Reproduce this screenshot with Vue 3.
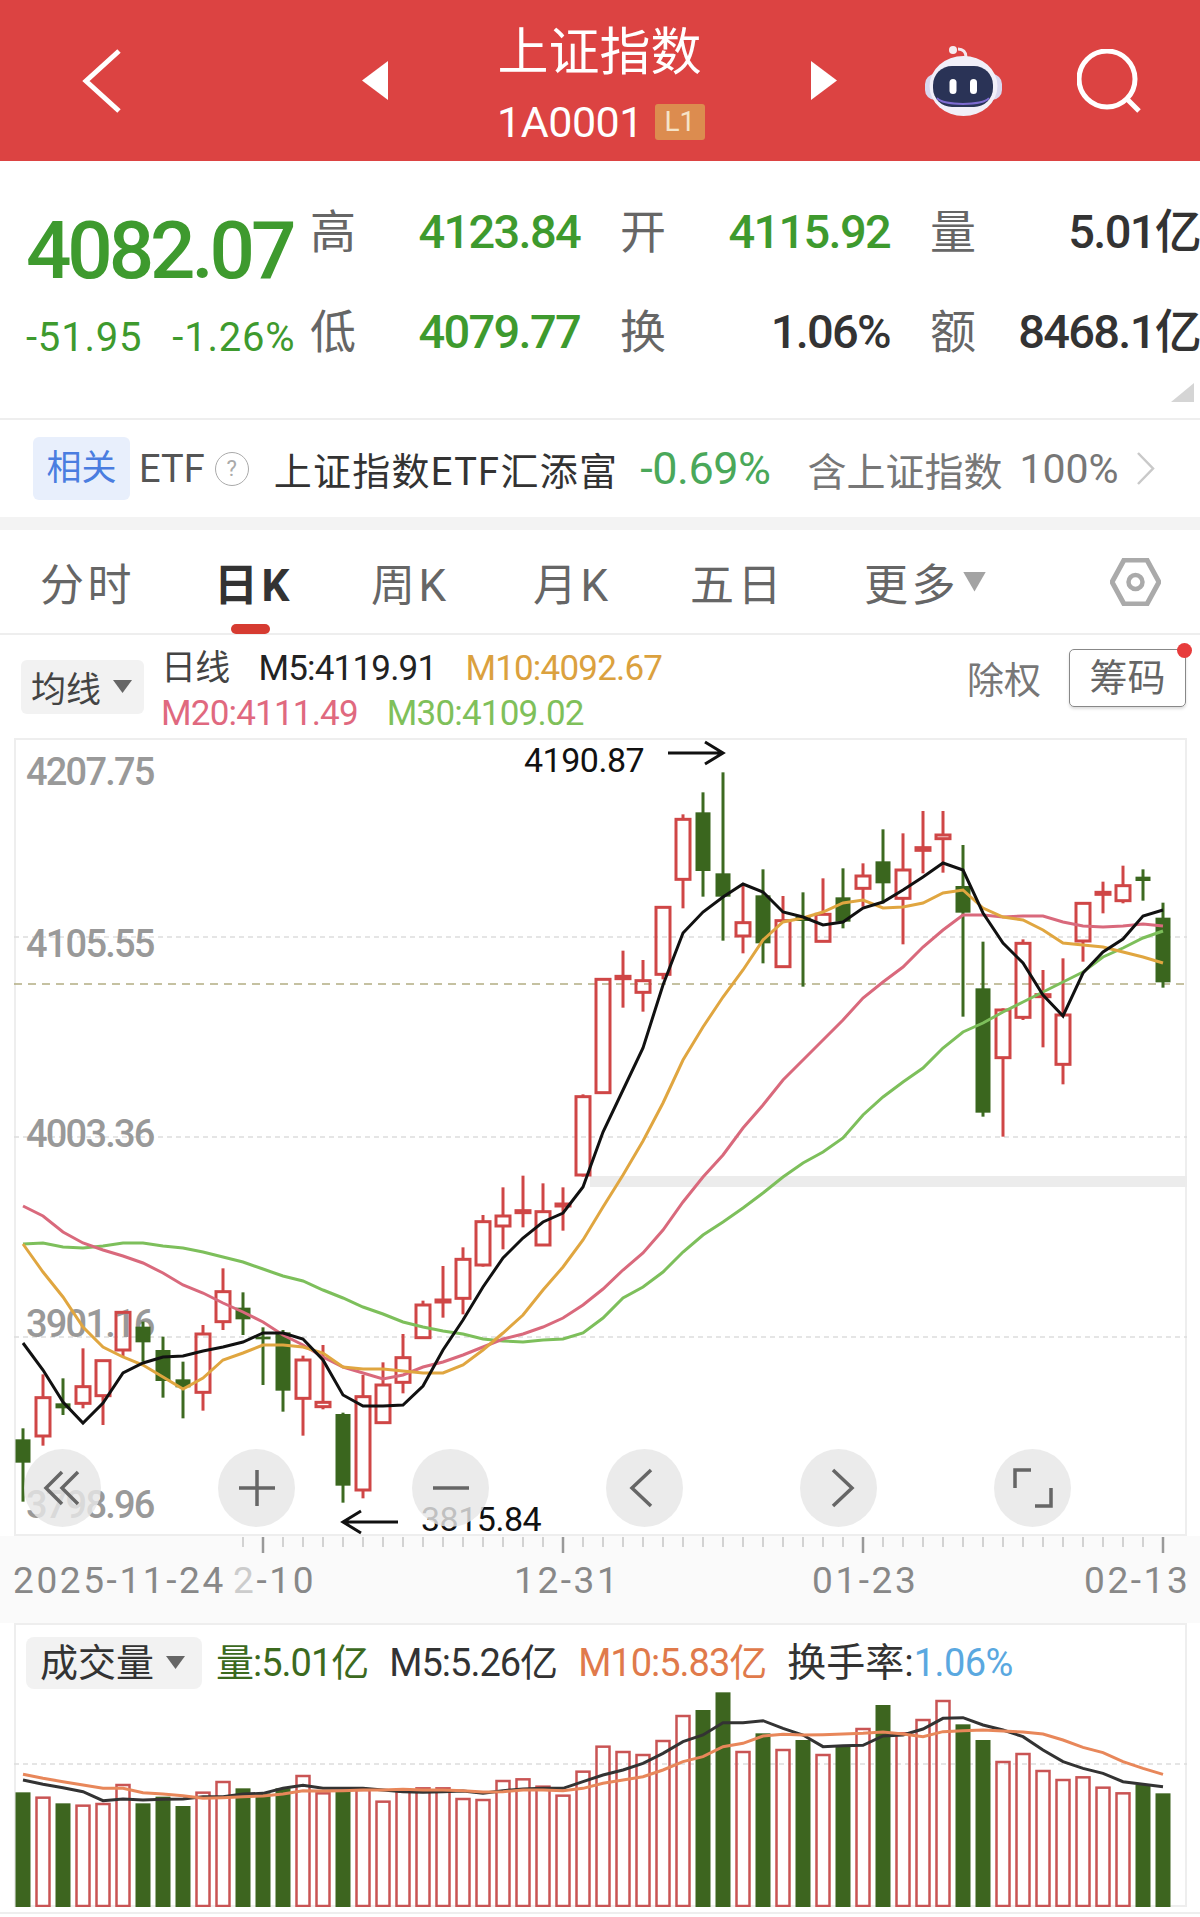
<template>
  <div class="page">
    <header class="topbar">
      <svg class="back" width="41" height="66" viewBox="0 0 41 66"><path d="M38 3 5 33l33 30" fill="none" stroke="#fff" stroke-width="5" /></svg>
      <svg class="prev" width="26" height="39" viewBox="0 0 26 39"><path d="M26 0v39L0 19.500z" fill="#fff" /></svg>
      <div class="title-block">
        <div class="title">上证指数</div>
        <div class="code-row">
          <span class="code">1A0001</span>
          <span class="level">L1</span>
        </div>
      </div>
      <svg class="next" width="26" height="39" viewBox="0 0 26 39"><path d="M0 0v39l26-19.500z" fill="#fff" /></svg>
      <svg class="robot" width="77" height="70" viewBox="0 0 77 70">
        <path d="M41 11c0-5-3-8-8-8" fill="none" stroke="#f4e8ee" stroke-width="3" />
        <circle cx="28" cy="4" r="4" fill="#f6edf1" />
        <rect x="0" y="28" width="77" height="26" rx="10" fill="#d9d7ee" />
        <ellipse cx="38.500" cy="40" rx="34" ry="30" fill="#f1eff8" />
        <rect x="8" y="20" width="60" height="41" rx="19" fill="#2a3356" />
        <path d="M12 52c6 8 46 8 52 0" fill="none" stroke="#7d6bd0" stroke-width="2" />
        <rect x="24.500" y="33" width="7" height="15" rx="3.500" fill="#fff" />
        <rect x="45" y="33" width="7" height="15" rx="3.500" fill="#fff" />
      </svg>
      <svg class="search" width="64" height="64" viewBox="0 0 64 64">
        <circle cx="30" cy="30" r="28" fill="none" stroke="#fff" stroke-width="5" />
        <path d="m50 50 12 12" stroke="#fff" stroke-width="5" />
      </svg>
    </header>

    <section class="quote">
      <div class="quote-main">
        <div class="last-price">4082.07</div>
        <div class="change">
          <span>-51.95</span>
          <span>-1.26%</span>
        </div>
      </div>
      <div class="quote-grid">
        <div v-for="item in quoteItems" :key="item.label" class="quote-cell">
          <span class="quote-label">{{ item.label }}</span>
          <span class="quote-value" :class="{ down: item.down }">{{ item.value }}</span>
        </div>
      </div>
      <div class="corner"></div>
    </section>

    <section class="etf">
      <span class="etf-tag">相关</span>
      <span class="etf-name">ETF</span>
      <span class="etf-help">?</span>
      <span class="etf-title">上证指数ETF汇添富</span>
      <span class="etf-change">-0.69%</span>
      <span class="etf-hold">含上证指数</span>
      <span class="etf-weight">100%</span>
      <svg class="etf-more" width="19" height="33" viewBox="0 0 19 33"><path d="m2 1 15 15.500L2 32" fill="none" stroke="#c9c9c9" stroke-width="2.500" /></svg>
    </section>

    <nav class="tabs">
      <span v-for="tab in tabs" :key="tab.label" class="tab" :class="{ active: tab.active }" :style="{ width: tab.width + 'px' }">{{ tab.label }}</span>
      <span class="tab-caret"></span>
      <svg class="gear" width="51" height="48" viewBox="0 0 51 48">
        <path d="M14 2h23l12 22-12 22H14L2 24z" fill="none" stroke="#aaa" stroke-width="5" />
        <circle cx="25.500" cy="24" r="7" fill="none" stroke="#aaa" stroke-width="4.500" />
      </svg>
    </nav>

    <section class="indicators">
      <div class="select select-ma">
        <span>均线</span>
        <i class="caret"></i>
      </div>
      <div class="ma-legend">
        <div class="ma-row">
          <span class="ma-daily">日线</span>
          <span class="ma-black">M5:4119.91</span>
          <span class="ma-orange">M10:4092.67</span>
        </div>
        <div class="ma-row">
          <span class="ma-pink">M20:4111.49</span>
          <span class="ma-green">M30:4109.02</span>
        </div>
      </div>
      <div class="ma-actions">
        <span class="adjust">除权</span>
        <span class="chips">筹码<i class="chips-dot"></i></span>
      </div>
    </section>

    <section class="chart">
      <svg class="chart-svg" width="1173" height="798" viewBox="14 738 1173 798">
        <rect x="590" y="1176" width="597" height="11" fill="#ececec" />
        <line v-for="y in [937, 1137, 1337]" :key="y" x1="14" x2="1187" :y1="y" :y2="y" stroke="#ddd" stroke-width="1.500" stroke-dasharray="5 4" />
        <line x1="14" x2="1187" y1="984" y2="984" stroke="#b3ad83" stroke-width="1.500" stroke-dasharray="8 6" />
        <text v-for="label in axisPrices" :key="label.text" class="price-label" x="26" :y="label.y">{{ label.text }}</text>

        <g v-for="c in candles" :key="c.x">
          <template v-if="c.up">
            <line :x1="c.x" :x2="c.x" :y1="c.high" :y2="c.top" stroke="#cf4646" stroke-width="3" />
            <line :x1="c.x" :x2="c.x" :y1="c.bottom" :y2="c.low" stroke="#cf4646" stroke-width="3" />
            <rect :x="c.x - 7" :y="c.top" width="14" :height="c.bottom - c.top" fill="none" stroke="#cf4646" stroke-width="3" />
          </template>
          <template v-else>
            <line :x1="c.x" :x2="c.x" :y1="c.high" :y2="c.low" stroke="#3d6a21" stroke-width="3" />
            <rect :x="c.x - 7.500" :y="c.top" width="15" :height="c.bottom - c.top" fill="#3a661e" />
          </template>
        </g>

        <polyline :points="points(m30)" fill="none" stroke="#7dbf5b" stroke-width="3" />
        <polyline :points="points(m20)" fill="none" stroke="#d9697c" stroke-width="3" />
        <polyline :points="points(m10)" fill="none" stroke="#e0a640" stroke-width="3" />
        <polyline :points="points(m5)" fill="none" stroke="#111" stroke-width="3" />

        <text class="mark-label" x="524" y="772">4190.87</text>
        <path d="M668 753h54m-17-11 18 11-18 11" fill="none" stroke="#111" stroke-width="3" />
        <text class="mark-label" x="421" y="1531">3815.84</text>
        <path d="M398 1522h-54m17-11-18 11 18 11" fill="none" stroke="#111" stroke-width="3" />
      </svg>

      <div class="chart-buttons">
        <span class="round-btn">
          <svg width="40" height="40" viewBox="0 0 40 40"><path d="M19 4 3 20l16 16M35 4 19 20l16 16" fill="none" stroke="#666" stroke-width="3.500" /></svg>
        </span>
        <span class="round-btn">
          <svg width="40" height="40" viewBox="0 0 40 40"><path d="M2 20h36M20 2v36" fill="none" stroke="#666" stroke-width="3.500" /></svg>
        </span>
        <span class="round-btn">
          <svg width="40" height="40" viewBox="0 0 40 40"><path d="M2 20h36" fill="none" stroke="#666" stroke-width="3.500" /></svg>
        </span>
        <span class="round-btn">
          <svg width="40" height="40" viewBox="0 0 40 40"><path d="M26 2 7 20l19 18" fill="none" stroke="#666" stroke-width="3.500" /></svg>
        </span>
        <span class="round-btn">
          <svg width="40" height="40" viewBox="0 0 40 40"><path d="m14 2 19 18-19 18" fill="none" stroke="#666" stroke-width="3.500" /></svg>
        </span>
        <span class="round-btn">
          <svg width="44" height="44" viewBox="0 0 44 44"><path d="M20 4H4v18M24 40h16V22" fill="none" stroke="#666" stroke-width="3.500" /></svg>
        </span>
      </div>
    </section>

    <div class="date-axis">
      <svg width="1200" height="87" viewBox="0 1536 1200 87">
        <line v-for="t in ticks" :key="t.x" :x1="t.x" :x2="t.x" y1="1537" :y2="t.major ? 1553 : 1547" :stroke="t.major ? '#999' : '#c4c4c4'" :stroke-width="t.major ? 2.500 : 1.500" />
        <text class="date-label" x="13" y="1593">2025-11-24</text>
        <text class="date-label" x="233" y="1593"><tspan fill="#ccc">2</tspan>-10</text>
        <text class="date-label" x="514" y="1593">12-31</text>
        <text class="date-label" x="812" y="1593">01-23</text>
        <text class="date-label" x="1084" y="1593">02-13</text>
      </svg>
    </div>

    <section class="volume">
      <div class="volume-legend">
        <div class="select select-volume">
          <span>成交量</span>
          <i class="caret"></i>
        </div>
        <span class="vol-now">量:5.01亿</span>
        <span class="vol-m5">M5:5.26亿</span>
        <span class="vol-m10">M10:5.83亿</span>
        <span class="vol-rate">换手率:<em>1.06%</em></span>
      </div>
      <svg class="volume-svg" width="1173" height="217" viewBox="14 1690 1173 217">
        <line x1="14" x2="1187" y1="1764" y2="1764" stroke="#ddd" stroke-width="1.500" stroke-dasharray="5 4" />
        <template v-for="b in volumeBars" :key="b.x">
          <rect v-if="b.up" :x="b.x - 6.500" :y="b.top" width="13" :height="1906 - b.top" fill="none" stroke="#c95454" stroke-width="2.500" />
          <rect v-else :x="b.x - 7.500" :y="b.top" width="15" :height="1907 - b.top" fill="#3d651f" />
        </template>
        <polyline :points="points(volM5)" fill="none" stroke="#333" stroke-width="3" />
        <polyline :points="points(volM10)" fill="none" stroke="#e8875a" stroke-width="3" />
      </svg>
    </section>
    <div class="page-end"></div>
  </div>
</template>

<script setup>
const quoteItems = [
  { label: '高', value: '4123.84', down: true },
  { label: '开', value: '4115.92', down: true },
  { label: '量', value: '5.01亿' },
  { label: '低', value: '4079.77', down: true },
  { label: '换', value: '1.06%' },
  { label: '额', value: '8468.1亿' },
]

const tabs = [
  { label: '分时', width: 174 },
  { label: '日K', width: 157, active: true },
  { label: '周K', width: 162 },
  { label: '月K', width: 157 },
  { label: '五日', width: 174 },
  { label: '更多', width: 99 },
]

const axisPrices = [
  { text: '4207.75', y: 785 },
  { text: '4105.55', y: 957 },
  { text: '4003.36', y: 1147 },
  { text: '3901.16', y: 1337 },
  { text: '3798.96', y: 1518 },
]

const xAt = (i) => 23 + i * 20

// [high, bodyTop, bodyBottom, low, up] read off 3x crops, hence the /3 below
const leftCandles = [
  [895, 928, 998, 1115, 0], [733, 803, 918, 947, 1], [745, 820, 835, 855, 0], [655, 770, 820, 835, 1],
  [690, 692, 797, 885, 1], [545, 547, 660, 680, 1], [575, 590, 637, 695, 0], [620, 660, 753, 803, 0],
  [695, 748, 772, 865, 0], [585, 612, 787, 842, 1], [415, 485, 575, 600, 1], [487, 533, 568, 615, 0],
  [592, 620, 628, 765, 0], [600, 607, 782, 845, 0], [677, 690, 805, 917, 1], [645, 817, 830, 838, 1],
  [848, 852, 1067, 1118, 0], [735, 800, 1080, 1105, 1], [697, 765, 878, 880, 1], [612, 683, 757, 790, 1],
  [512, 525, 623, 625, 1], [408, 510, 516, 563, 1], [352, 388, 505, 553, 1], [255, 275, 405, 410, 1],
  [172, 258, 288, 358, 1], [137, 242, 248, 292, 1], [160, 245, 345, 345, 1], [172, 222, 228, 302, 1],
]
const rightCandles = [
  [1063, 1070, 1305, 1310, 1], [718, 718, 1058, 1060, 1], [632, 709, 716, 803, 1], [660, 722, 757, 815, 1],
  [500, 502, 703, 718, 1], [223, 238, 418, 505, 1], [157, 217, 393, 470, 0], [97, 400, 470, 602, 0],
  [435, 548, 588, 640, 1], [388, 466, 610, 670, 0], [468, 542, 680, 683, 1], [457, 530, 543, 740, 0],
  [415, 523, 604, 605, 1], [385, 472, 545, 565, 0], [370, 408, 445, 500, 1], [268, 364, 430, 490, 0],
  [280, 390, 475, 613, 1], [213, 323, 331, 400, 1], [213, 285, 296, 398, 1], [315, 438, 518, 830, 0],
  [605, 745, 1118, 1130, 0], [805, 810, 953, 1190, 1], [598, 610, 832, 840, 1], [690, 764, 770, 922, 1],
  [655, 825, 973, 1033, 1], [487, 490, 603, 665, 1], [425, 457, 463, 520, 1], [377, 437, 482, 490, 1],
  [388, 410, 423, 482, 0], [488, 533, 727, 743, 0],
]

const toCandle = (row, i, base) => ({
  x: xAt(i),
  high: base + row[0] / 3,
  top: base + row[1] / 3,
  bottom: base + row[2] / 3,
  low: base + row[3] / 3,
  up: row[4] === 1,
})

const candles = [
  ...leftCandles.map((row, i) => toCandle(row, i, 1130)),
  ...rightCandles.map((row, i) => toCandle(row, i + 28, 740)),
]

const m5 = [
  1343, 1370, 1402, 1423, 1403, 1373, 1363, 1357, 1356, 1351, 1347, 1342, 1333, 1333, 1339, 1360, 1395, 1406, 1406, 1405,
  1386, 1350, 1320, 1287, 1258, 1238, 1222, 1213, 1187, 1132, 1090, 1048, 985, 933, 912, 897, 884, 892, 912, 917,
  925, 922, 908, 902, 890, 877, 863, 870, 913, 943, 963, 995, 1016, 973, 952, 939, 916, 910,
]
const m10 = [
  1244, 1272, 1297, 1327, 1347, 1357, 1365, 1377, 1389, 1378, 1360, 1353, 1345, 1345, 1347, 1353, 1367, 1369, 1369, 1371,
  1373, 1373, 1365, 1350, 1333, 1315, 1290, 1267, 1240, 1207, 1175, 1141, 1103, 1060, 1027, 997, 970, 940, 922, 918,
  912, 903, 900, 908, 907, 903, 893, 890, 908, 917, 920, 930, 943, 945, 947, 952, 957, 963,
]
const m20 = [
  1206, 1216, 1232, 1243, 1250, 1256, 1263, 1273, 1285, 1293, 1303, 1312, 1322, 1335, 1345, 1357, 1367, 1373, 1379, 1375,
  1367, 1362, 1355, 1347, 1339, 1334, 1327, 1318, 1305, 1289, 1270, 1253, 1230, 1202, 1177, 1155, 1128, 1105, 1080, 1060,
  1040, 1020, 998, 982, 967, 947, 930, 915, 915, 917, 916, 916, 922, 926, 927, 926, 924, 926,
]
const m30 = [
  1244, 1243, 1247, 1248, 1246, 1243, 1243, 1246, 1248, 1252, 1257, 1262, 1269, 1276, 1281, 1290, 1298, 1307, 1314, 1322,
  1327, 1331, 1334, 1339, 1341, 1342, 1340, 1339, 1333, 1318, 1298, 1287, 1272, 1252, 1235, 1222, 1208, 1193, 1177, 1163,
  1152, 1138, 1115, 1097, 1082, 1068, 1048, 1032, 1023, 1012, 1002, 992, 982, 972, 957, 948, 938, 931,
]

const points = (ys) => ys.map((y, i) => `${xAt(i)},${y}`).join(' ')

const ticks = Array.from({ length: 47 }, (_, n) => {
  const i = n + 11
  return { x: xAt(i), major: [12, 27, 42, 57].includes(i) }
})

// [top on a 3x crop, up]
const volumes = [
  [577, 0], [593, 1], [610, 0], [617, 1], [612, 1], [555, 1], [610, 0], [590, 0], [618, 0], [578, 1],
  [546, 1], [565, 0], [580, 0], [565, 0], [528, 1], [580, 1], [575, 0], [570, 1], [605, 1], [575, 1],
  [565, 1], [565, 1], [597, 1], [600, 1], [543, 1], [538, 1], [560, 1], [587, 1], [515, 1], [440, 1],
  [456, 1], [465, 1], [423, 1], [348, 1], [330, 0], [277, 0], [456, 1], [400, 0], [450, 1], [420, 0],
  [465, 1], [435, 0], [387, 1], [315, 0], [400, 1], [360, 1], [303, 1], [373, 0], [420, 0], [486, 1],
  [462, 1], [513, 1], [540, 1], [532, 1], [563, 1], [580, 1], [555, 0], [580, 0],
]
const volumeBars = volumes.map(([top, up], i) => ({ x: xAt(i), top: 1600 + top / 3, up: up === 1 }))

const toVolumeY = (list) => list.map((v) => 1600 + v / 3)
const volM5 = toVolumeY([
  540, 553, 563, 575, 602, 597, 600, 598, 597, 590, 590, 582, 580, 565, 556, 565, 565, 565, 570, 575,
  577, 575, 573, 580, 572, 567, 565, 565, 545, 525, 510, 490, 460, 425, 405, 368, 368, 362, 385, 405,
  440, 437, 436, 408, 405, 387, 355, 353, 375, 390, 410, 450, 485, 505, 520, 545, 553, 560,
])
const volM10 = toVolumeY([
  523, 535, 545, 555, 565, 565, 578, 582, 587, 595, 593, 590, 588, 582, 572, 573, 572, 570, 570, 568,
  570, 570, 572, 576, 575, 570, 570, 572, 565, 550, 540, 530, 510, 485, 470, 440, 430, 408, 403, 405,
  404, 402, 400, 396, 402, 410, 395, 392, 390, 393, 396, 402, 420, 442, 458, 485, 505, 523,
])
</script>

<style scoped>
.page {
  width: 1200px;
  height: 1917px;
  overflow: hidden;
  background: #fff;
  font-family: Roboto, "Noto Sans CJK SC", sans-serif;
  color: #333;
}
.topbar {
  height: 161px;
  display: flex;
  align-items: center;
  background: #dc4342;
  color: #fff;
}
.back {
  margin-left: 81px;
}
.prev {
  margin-left: 240px;
}
.next {
  flex: none;
}
.title-block {
  width: 423px;
  align-self: flex-start;
  display: flex;
  flex-direction: column;
  align-items: center;
  padding-top: 18px;
}
.title {
  font-size: 51px;
  line-height: 60px;
  font-family: "Noto Sans CJK SC", sans-serif;
}
.code-row {
  display: flex;
  align-items: center;
  gap: 12px;
  margin-top: 26px;
  height: 36px;
  padding-left: 3px;
}
.code {
  font-size: 43px;
  letter-spacing: -0.5px;
}
.level {
  width: 50px;
  height: 36px;
  line-height: 36px;
  text-align: center;
  background: #dc8c4f;
  color: #f6e3c8;
  font-size: 28px;
  border-radius: 3px;
}
.robot {
  margin-left: 88px;
}
.search {
  margin-left: 75px;
}

.quote {
  position: relative;
  height: 259px;
  display: flex;
  border-bottom: 2px solid #eee;
  box-sizing: border-box;
}
.quote-main {
  width: 310px;
  padding-left: 26px;
  box-sizing: border-box;
}
.last-price {
  margin-top: 52px;
  font-size: 80px;
  line-height: 76px;
  font-weight: 500;
  letter-spacing: -4.1px;
  color: #3e9a2e;
  white-space: nowrap;
}
.change {
  margin-top: 27px;
  display: flex;
  gap: 30px;
  font-size: 40px;
  line-height: 44px;
  letter-spacing: 0.8px;
  color: #3e9a2e;
  white-space: nowrap;
}
.quote-grid {
  margin-top: 19px;
  display: grid;
  grid-template-columns: repeat(3, 270px);
  grid-auto-rows: 100px;
  column-gap: 40px;
}
.quote-cell {
  display: flex;
  justify-content: space-between;
  height: 100px;
}
.quote-label {
  font-size: 46px;
  line-height: 96px;
  color: #666;
  font-family: "Noto Sans CJK SC", sans-serif;
}
.quote-value {
  font-size: 47px;
  line-height: 104px;
  font-weight: 500;
  letter-spacing: -1.7px;
  color: #333;
}
.quote-value.down {
  color: #3e9a2e;
}
.corner {
  position: absolute;
  right: 6px;
  bottom: 16px;
  width: 23px;
  height: 19px;
  background: #d5d5d5;
  clip-path: polygon(100% 0, 100% 100%, 0 100%);
}

.etf {
  height: 97px;
  display: flex;
  align-items: center;
  padding-left: 33px;
  border-bottom: 13px solid #f3f3f3;
  box-sizing: content-box;
  white-space: nowrap;
}
.etf-tag {
  width: 97px;
  height: 63px;
  line-height: 63px;
  text-align: center;
  font-size: 35px;
  color: #4a7de0;
  background: #e8effc;
  border-radius: 6px;
}
.etf-name {
  margin-left: 9px;
  font-size: 38px;
  color: #555;
}
.etf-help {
  margin-left: 10px;
  width: 32px;
  height: 32px;
  line-height: 32px;
  border: 1.500px solid #aaa;
  border-radius: 50%;
  text-align: center;
  font-size: 22px;
  color: #aaa;
}
.etf-title {
  margin-left: 25px;
  font-size: 38px;
  color: #333;
  letter-spacing: 1.300px;
}
.etf-change {
  margin-left: 22px;
  font-size: 45px;
  letter-spacing: -0.5px;
  color: #4aa85a;
}
.etf-hold {
  margin-left: 37px;
  font-size: 39px;
  color: #777;
}
.etf-weight {
  margin-left: 17px;
  font-size: 41px;
  color: #777;
}
.etf-more {
  margin-left: 17px;
}

.tabs {
  height: 103px;
  display: flex;
  align-items: center;
  padding-left: 40px;
  border-bottom: 2px solid #eee;
}
.tab {
  position: relative;
  flex: none;
  font-size: 44px;
  letter-spacing: 3.5px;
  color: #666;
}
.tab.active {
  font-weight: 700;
  color: #333;
}
.tab.active::after {
  content: "";
  position: absolute;
  left: 17px;
  bottom: -20px;
  width: 39px;
  height: 10px;
  border-radius: 5px;
  background: #d63b31;
}
.tab-caret {
  width: 23px;
  height: 20px;
  background: #a3a3a3;
  clip-path: polygon(0 0, 100% 0, 50% 100%);
}
.gear {
  margin-left: auto;
  margin-right: 39px;
}

.indicators {
  height: 103px;
  display: flex;
  align-items: center;
}
.select {
  display: flex;
  align-items: center;
  background: #f2f2f2;
  border-radius: 6px;
  color: #444;
}
.select-ma {
  margin-left: 21px;
  width: 123px;
  height: 54px;
  padding-left: 10px;
  box-sizing: border-box;
  font-size: 35px;
  gap: 12px;
}
.caret {
  width: 19px;
  height: 13px;
  background: #666;
  clip-path: polygon(0 0, 100% 0, 50% 100%);
}
.ma-legend {
  margin-left: 17px;
  padding-top: 8px;
}
.ma-row {
  display: flex;
  gap: 29px;
  height: 45px;
  line-height: 45px;
  font-size: 35px;
  letter-spacing: -0.8px;
}
.ma-daily {
  color: #444;
}
.ma-black {
  color: #222;
}
.ma-orange {
  color: #dba13e;
}
.ma-pink {
  color: #e0697f;
}
.ma-green {
  color: #7fc05a;
}
.ma-actions {
  margin-left: auto;
  align-self: flex-start;
  margin-top: 14px;
  display: flex;
  align-items: center;
}
.adjust {
  font-size: 37px;
  color: #777;
}
.chips {
  position: relative;
  margin-left: 28px;
  margin-right: 14px;
  width: 117px;
  height: 58px;
  line-height: 56px;
  text-align: center;
  font-size: 38px;
  color: #666;
  border: 1px solid #888;
  border-radius: 5px;
  box-sizing: border-box;
  box-shadow: 0 2px 3px #ddd;
}
.chips-dot {
  position: absolute;
  right: -7px;
  top: -7px;
  width: 15px;
  height: 15px;
  border-radius: 50%;
  background: #e73c3c;
}

.chart {
  position: relative;
  margin-left: 14px;
  width: 1173px;
  height: 798px;
  box-shadow: inset 0 0 0 2px #eee;
}
.chart-svg {
  display: block;
}
.price-label {
  font-size: 38px;
  letter-spacing: -1.800px;
  fill: #999;
  font-weight: 500;
}
.mark-label {
  font-size: 34px;
  letter-spacing: -0.5px;
  fill: #111;
}
.chart-buttons {
  position: absolute;
  left: 10px;
  top: 711px;
  display: flex;
  gap: 117px;
}
.round-btn {
  width: 77px;
  height: 78px;
  display: flex;
  align-items: center;
  justify-content: center;
  border-radius: 50%;
  background: rgba(230, 230, 230, 0.82);
}

.date-axis {
  height: 87px;
  background: #fafafa;
}
.date-axis svg {
  display: block;
}
.date-label {
  font-size: 37px;
  letter-spacing: 2.600px;
  fill: #888;
}

.volume {
  margin-left: 14px;
  width: 1173px;
  height: 284px;
  box-shadow: inset 0 0 0 2px #eee;
}
.volume-legend {
  height: 67px;
  padding: 12px 0 0 12px;
  box-sizing: border-box;
  display: flex;
  align-items: center;
  font-size: 38px;
  letter-spacing: -1px;
  line-height: 52px;
  white-space: nowrap;
}
.select-volume {
  width: 176px;
  height: 52px;
  flex: none;
  padding-left: 14px;
  box-sizing: border-box;
  gap: 12px;
  font-size: 38px;
  letter-spacing: 0;
  border-radius: 8px;
  color: #333;
}
.vol-now {
  margin-left: 14px;
  color: #3c6a1e;
}
.vol-m5 {
  margin-left: 21px;
  color: #333;
}
.vol-m10 {
  margin-left: 21px;
  color: #e07a4b;
}
.vol-rate {
  margin-left: 21px;
  font-size: 39px;
  letter-spacing: 0;
  color: #333;
}
.vol-rate em {
  font-style: normal;
  font-size: 38px;
  letter-spacing: -0.6px;
  color: #5aa8e0;
}
.volume-svg {
  display: block;
}
.page-end {
  margin-top: 5px;
  height: 2px;
  background: #eee;
}
</style>

<style>
body {
  background: #fff;
}
</style>
